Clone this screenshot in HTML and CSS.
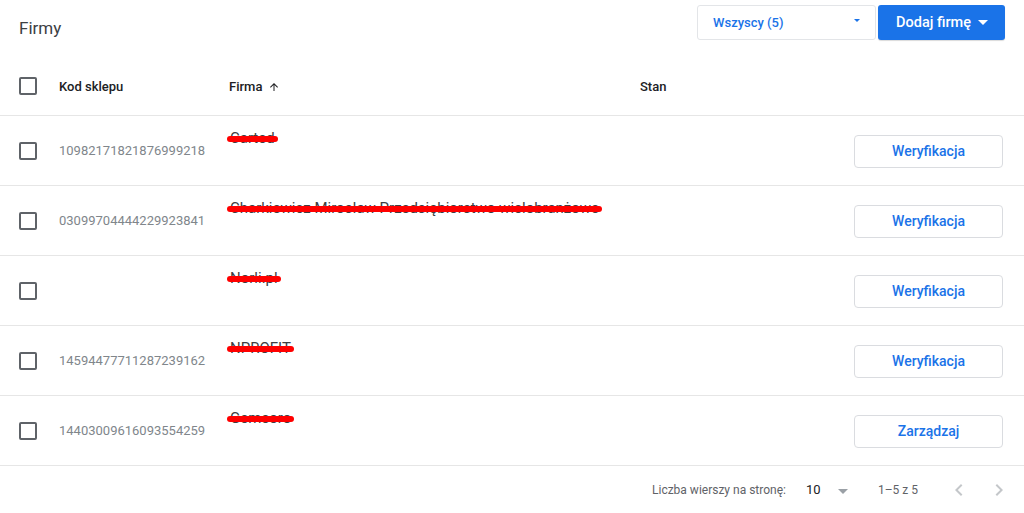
FILE: index.html
```html
<!DOCTYPE html>
<html lang="pl">
<head>
<meta charset="utf-8">
<link rel="stylesheet" href="styles.css">
</head>
<body>
<div class="page">
  <div class="topbar">
    <h1 class="title">Firmy</h1>
    <div class="actions">
      <button class="select">
        <span>Wszyscy (5)</span>
        <svg class="select-caret" width="8" height="4" viewBox="0 0 8 4"><path d="M1 0h6L4 3z" fill="#1a73e8"/></svg>
      </button>
      <button class="primary">
        <span>Dodaj firmę</span>
        <svg width="10" height="5" viewBox="0 0 10 5"><path d="M0 0h10L5 5z" fill="#fff"/></svg>
      </button>
    </div>
  </div>

  <div class="row head">
    <div class="cell"><span class="checkbox"></span></div>
    <div class="cell">Kod sklepu</div>
    <div class="cell">Firma
      <svg class="sort" width="12" height="12" viewBox="0 0 24 24"><path d="M4 12l1.41 1.41L11 7.83V20h2V7.83l5.58 5.59L20 12l-8-8-8 8z" fill="#202124"/></svg>
    </div>
    <div class="cell">Stan</div>
    <div class="cell"></div>
  </div>

  <div class="row">
    <div class="cell"><span class="checkbox"></span></div>
    <div class="cell code">10982171821876999218</div>
    <div class="cell name"><span class="redacted">Carted</span></div>
    <div class="cell"></div>
    <div class="cell"><button class="outline">Weryfikacja</button></div>
  </div>
  <div class="row">
    <div class="cell"><span class="checkbox"></span></div>
    <div class="cell code">03099704444229923841</div>
    <div class="cell name"><span class="redacted">Charkiewicz Mirosław Przedsiębiorstwo wielobranżowe</span></div>
    <div class="cell"></div>
    <div class="cell"><button class="outline">Weryfikacja</button></div>
  </div>
  <div class="row">
    <div class="cell"><span class="checkbox"></span></div>
    <div class="cell code"></div>
    <div class="cell name"><span class="redacted">Norli.pl</span></div>
    <div class="cell"></div>
    <div class="cell"><button class="outline">Weryfikacja</button></div>
  </div>
  <div class="row">
    <div class="cell"><span class="checkbox"></span></div>
    <div class="cell code">14594477711287239162</div>
    <div class="cell name"><span class="redacted">NPROFIT</span></div>
    <div class="cell"></div>
    <div class="cell"><button class="outline">Weryfikacja</button></div>
  </div>
  <div class="row">
    <div class="cell"><span class="checkbox"></span></div>
    <div class="cell code">14403009616093554259</div>
    <div class="cell name"><span class="redacted">Gemeoro</span></div>
    <div class="cell"></div>
    <div class="cell"><button class="outline">Zarządzaj</button></div>
  </div>

  <div class="footer">
    <span class="label">Liczba wierszy na stronę:</span>
    <span class="perpage">10</span>
    <svg class="pp-caret" width="10" height="5" viewBox="0 0 10 5"><path d="M0 0h10L5 5z" fill="#9aa0a6"/></svg>
    <span class="range">1–5 z 5</span>
    <svg class="nav" width="24" height="24" viewBox="0 0 24 24"><path d="M15.41 7.41L14 6l-6 6 6 6 1.41-1.41L10.83 12z" fill="#c4c7ca"/></svg>
    <svg class="nav" width="24" height="24" viewBox="0 0 24 24"><path d="M10 6L8.59 7.41 13.17 12l-4.58 4.59L10 18l6-6z" fill="#c4c7ca"/></svg>
  </div>
</div>
</body>
</html>
```

FILE: styles.css
```css
* { box-sizing: border-box; }
html, body { margin: 0; padding: 0; background: #fff; }
body {
  font-family: Roboto, "Liberation Sans", Arial, sans-serif;
  color: #202124;
  width: 1024px;
  height: 513px;
  overflow: hidden;
}
button { font-family: inherit; cursor: pointer; }

.topbar {
  display: flex;
  justify-content: space-between;
  align-items: flex-start;
  height: 58px;
  padding: 5px 19px 0 19px;
}
.title {
  margin: 13px 0 0 0;
  font-size: 17px;
  font-weight: 400;
  color: #3c4043;
  line-height: 20px;
}
.actions {
  display: flex;
  gap: 2px;
}
.select {
  width: 179px;
  height: 35px;
  background: #fff;
  border: 1px solid #e3e5e8;
  border-radius: 3px;
  display: flex;
  align-items: center;
  justify-content: space-between;
  padding: 0 14px 0 15px;
  color: #1a73e8;
  font-size: 13px;
  font-weight: 500;
}
.select-caret { margin-top: -3px; }
.primary {
  width: 127px;
  height: 35px;
  background: #1a73e8;
  border: none;
  border-radius: 3px;
  color: #fff;
  font-size: 14.5px;
  font-weight: 500;
  display: flex;
  align-items: center;
  justify-content: center;
  gap: 7px;
  padding: 0 0 0 1px;
  box-shadow: 0 1px 1px rgba(0,0,0,0.15);
}

.row {
  display: grid;
  grid-template-columns: 40px 170px 411px 1fr 149px;
  padding: 0 21px 0 19px;
  height: 70px;
  border-bottom: 1px solid #e6e6e6;
  align-items: center;
}
.row.head {
  height: 58px;
  padding-bottom: 1px;
  font-size: 13px;
  font-weight: 500;
  color: #202124;
}
.cell {
  display: flex;
  align-items: center;
}
.head .cell { gap: 6px; }
.sort { margin-top: 1px; }

.checkbox {
  display: block;
  width: 18px;
  height: 18px;
  border: 2px solid #5f6368;
  border-radius: 2px;
}
.code {
  font-size: 13px;
  color: #80868b;
}
.name {
  align-self: start;
  padding-top: 13px;
  font-size: 15px;
  color: #3c4043;
  line-height: 18px;
}
.redacted {
  position: relative;
  padding-left: 1px;
}
.redacted::after {
  content: "";
  position: absolute;
  left: -2px;
  right: -3px;
  top: 7px;
  height: 6px;
  border-radius: 3px;
  background: #ff0000;
}
.outline {
  width: 149px;
  height: 33px;
  background: #fff;
  border: 1px solid #dadce0;
  border-radius: 4px;
  color: #1a73e8;
  font-size: 14px;
  font-weight: 500;
  margin-top: 1px;
}

.footer {
  display: flex;
  align-items: center;
  height: 47px;
  padding-left: 652px;
  font-size: 12px;
  color: #5f6368;
}
.footer > * { flex-shrink: 0; }
.label { width: 154px; }
.perpage { color: #202124; width: 32px; font-size: 13px; }
.pp-caret { margin-top: 3px; margin-right: 30px; }
.range { width: 69px; }
.nav { margin-right: 16px; }
```
